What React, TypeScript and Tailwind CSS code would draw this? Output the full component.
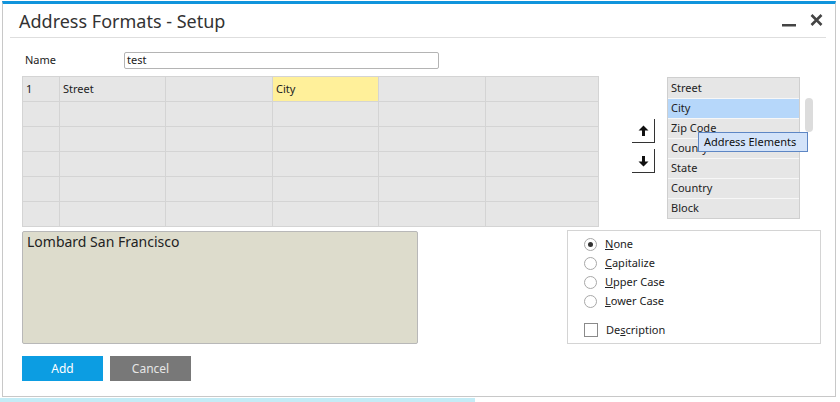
const CELL_ROWS = 6;
const CELL_COLS = 6;

const firstRow: Record<number, string> = { 0: "1", 1: "Street", 3: "City" };

const elements = ["Street", "City", "Zip Code", "County", "State", "Country", "Block"];

function Radio({ checked }: { checked?: boolean }) {
  return (
    <span className="flex h-[13px] w-[13px] items-center justify-center rounded-full border border-[#a8a8a8] bg-white">
      {checked && <span className="h-[5px] w-[5px] rounded-full bg-[#333]" />}
    </span>
  );
}

function ArrowButton({ down }: { down?: boolean }) {
  return (
    <div className="flex h-[24px] w-[23px] items-center justify-center border-b border-r border-[#333] bg-white">
      <svg width="11" height="12" viewBox="0 0 11 12" className={down ? "rotate-180" : ""}>
        <path d="M5.5 0.5 L10.5 5.5 H7 V11 H4 V5.5 H0.5 Z" fill="#111" />
      </svg>
    </div>
  );
}

export default function App() {
  return (
    <div className="h-[402px] w-[840px] overflow-hidden bg-white font-['Noto_Sans',sans-serif] text-[11px] text-[#222]">
      <div className="ml-[2px] mt-px flex h-[396px] w-[834px] flex-col border-b border-l border-r border-t-[3px] border-[#c8c8c8] border-t-[#1094dc]">
        {/* title bar */}
        <div className="flex h-[33px] items-start">
          <h1 className="mt-[5px] pl-[16px] text-[18px] leading-[24px] text-[#333]">Address Formats - Setup</h1>
          <div className="ml-auto mr-[12px] mt-[10px] flex gap-[14px]">
            <svg width="14" height="13" viewBox="0 0 14 13">
              <rect x="0" y="10" width="14" height="2.5" fill="#444" />
            </svg>
            <svg width="13" height="12" viewBox="0 0 13 12">
              <path d="M1.5 1 L11.5 11 M11.5 1 L1.5 11" stroke="#444" strokeWidth="2.6" />
            </svg>
          </div>
        </div>
        <div className="ml-[7px] mr-[9px] h-px bg-[#dedede]" />

        {/* name */}
        <div className="mt-[14px] flex h-[17px] items-center">
          <span className="ml-[22px] w-[99px]">Name</span>
          <div className="flex h-[17px] w-[315px] items-center rounded-[2px] border border-[#b4b4b4] pl-[2px]">test</div>
        </div>

        {/* grid + elements */}
        <div className="mt-[7px] flex items-start">
          <div className="ml-[19px] grid grid-cols-[36px_105px_106px_105px_106px_112px] gap-px bg-[#d4d4d4] p-px">
            {Array.from({ length: CELL_ROWS * CELL_COLS }).map((_, i) => {
              const r = Math.floor(i / CELL_COLS);
              const c = i % CELL_COLS;
              const text = r === 0 ? firstRow[c] : undefined;
              const yellow = r === 0 && c === 3;
              return (
                <div
                  key={i}
                  className={
                    "flex h-[24px] items-center pl-[3px] " + (yellow ? "bg-[#fff09a]" : "bg-[#e6e6e6]")
                  }
                >
                  {text}
                </div>
              );
            })}
          </div>

          <div className="ml-[33px] mt-[43px] flex flex-col gap-[6px]">
            <ArrowButton />
            <ArrowButton down />
          </div>

          <div className="relative ml-[12px] mt-[1px] w-[133px] border border-[#cfcfcf] bg-[#f4f4f4]">
            {elements.map((el, i) => (
              <div
                key={el}
                className={
                  "flex h-[20px] items-center pl-[3px] " +
                  (i > 0 ? "border-t border-[#f7f7f7] " : "") +
                  (el === "City" ? "bg-[#b6d7fa]" : "bg-[#e6e6e6]")
                }
              >
                {el}
              </div>
            ))}
            <div className="absolute left-[30px] top-[54px] flex h-[20px] w-[110px] items-center border border-[#5d86c4] bg-[#d3e3f9] pl-[5px] text-[#111]">
              Address Elements
            </div>
          </div>

          <div className="ml-[5px] mt-[22px] h-[34px] w-[8px] rounded-full bg-[#dcdcdc]" />
        </div>

        {/* preview + case options */}
        <div className="flex items-start">
          <div className="ml-[19px] mt-[4px] h-[113px] w-[396px] rounded-[2px] border border-[#b8b8b8] bg-[#dddccc] pl-[4px] text-[14px] leading-[19px] text-[#222]">
            Lombard San Francisco
          </div>

          <div className="ml-[149px] mt-[3px] h-[114px] w-[254px] border border-[#d4d4d4] pl-[16px] pt-[4px]">
            {[
              ["N", "one", true],
              ["C", "apitalize", false],
              ["U", "pper Case", false],
              ["L", "ower Case", false],
            ].map(([k, rest, checked]) => (
              <div key={String(k)} className="flex h-[19px] items-center gap-[8px]">
                <Radio checked={Boolean(checked)} />
                <span>
                  <span className="underline">{k}</span>
                  {rest}
                </span>
              </div>
            ))}
            <div className="mt-[9px] flex h-[20px] items-center gap-[8px]">
              <span className="h-[14px] w-[14px] border border-[#8a8a8a] bg-white" />
              <span>
                De<span className="underline">s</span>cription
              </span>
            </div>
          </div>
        </div>

        {/* buttons */}
        <div className="ml-[19px] mt-[12px] flex gap-[7px]">
          <button className="h-[25px] w-[81px] bg-[#0c9de2] text-[12px] text-white">Add</button>
          <button className="h-[25px] w-[81px] bg-[#787878] text-[12px] text-[#e6e6e6]">Cancel</button>
        </div>
      </div>
      <div className="mt-px h-[5px] w-[475px] bg-[#c4ecf6]" />
    </div>
  );
}
